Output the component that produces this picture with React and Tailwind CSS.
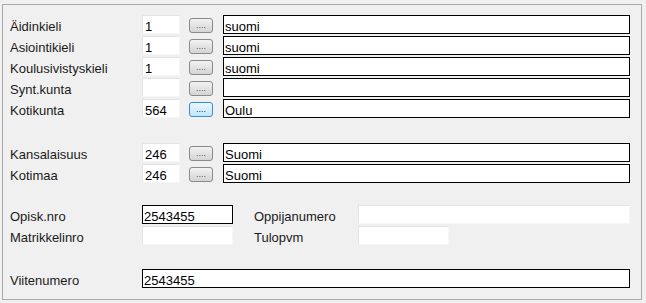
const CODE_ROWS = [
  { label: 'Äidinkieli', code: '1', name: 'suomi' },
  { label: 'Asiointikieli', code: '1', name: 'suomi' },
  { label: 'Koulusivistyskieli', code: '1', name: 'suomi' },
  { label: 'Synt.kunta', code: '', name: '' },
  { label: 'Kotikunta', code: '564', name: 'Oulu', focused: true },
];

const COUNTRY_ROWS = [
  { label: 'Kansalaisuus', code: '246', name: 'Suomi' },
  { label: 'Kotimaa', code: '246', name: 'Suomi' },
];

function Label({ children, w = 'w-[132px]', className = '' }) {
  return (
    <div className={`${w} shrink-0 text-[13px] text-[#1a1a1a] leading-none pt-[3px] ${className}`}>{children}</div>
  );
}

function SoftBox({ value, w }) {
  return (
    <div className={`${w} h-[19px] shrink-0 bg-white border border-[#e4e4e4] border-b-[#f6f6f6] border-r-[#f6f6f6] flex items-center pl-[2px] pt-[3px] text-[13px] leading-none`}>
      {value}
    </div>
  );
}

function HardBox({ value, w }) {
  return (
    <div className={`${w} h-[19px] shrink-0 bg-white border border-black flex items-center pl-[1px] pt-[3px] text-[13px] leading-none`}>
      {value}
    </div>
  );
}

function DotsButton({ focused }) {
  return (
    <button
      className={`w-[24px] h-[15px] shrink-0 rounded-[3px] border flex items-end justify-center pb-[2px] text-[9px] leading-none ${
        focused
          ? 'border-[#3c8ec9] bg-gradient-to-b from-[#eaf6fd] to-[#bee6fd] text-[#333]'
          : 'border-[#8a8a8a] bg-gradient-to-b from-[#f2f2f2] to-[#d4d4d4] text-[#555]'
      }`}
    >
      ....
    </button>
  );
}

function CodeRow({ label, code, name, focused }) {
  return (
    <div className="flex items-center h-[19px]">
      <Label>{label}</Label>
      <SoftBox value={code} w="w-[38px]" />
      <div className="ml-[9px] pt-[1px]">
        <DotsButton focused={focused} />
      </div>
      <div className="ml-[10px] flex-1">
        <HardBox value={name} w="w-full" />
      </div>
    </div>
  );
}

export default function App() {
  return (
    <div className="w-[646px] h-[303px] bg-[#f0f0f0] pt-[4px] pl-[2px] font-['Liberation_Sans',Arial,sans-serif]">
      <div className="w-[640px] h-[296px] border border-[#a9a9a9] pl-[7px] pr-[11px] pt-[10px] flex flex-col">
        <div className="flex flex-col gap-[2px]">
          {CODE_ROWS.map((r) => (
            <CodeRow key={r.label} {...r} />
          ))}
        </div>

        <div className="flex flex-col gap-[2px] mt-[25px]">
          {COUNTRY_ROWS.map((r) => (
            <CodeRow key={r.label} {...r} />
          ))}
        </div>

        <div className="flex flex-col gap-[2px] mt-[22px]">
          <div className="flex items-center h-[19px]">
            <Label>Opisk.nro</Label>
            <HardBox value="2543455" w="w-[91px]" />
            <Label w="w-[104px]" className="ml-[21px]">Oppijanumero</Label>
            <div className="flex-1">
              <SoftBox value="" w="w-full" />
            </div>
          </div>
          <div className="flex items-center h-[19px]">
            <Label>Matrikkelinro</Label>
            <SoftBox value="" w="w-[91px]" />
            <Label w="w-[104px]" className="ml-[21px]">Tulopvm</Label>
            <SoftBox value="" w="w-[91px]" />
          </div>
        </div>

        <div className="flex items-center h-[19px] mt-[24px]">
          <Label>Viitenumero</Label>
          <div className="flex-1">
            <HardBox value="2543455" w="w-full" />
          </div>
        </div>
      </div>
    </div>
  );
}
